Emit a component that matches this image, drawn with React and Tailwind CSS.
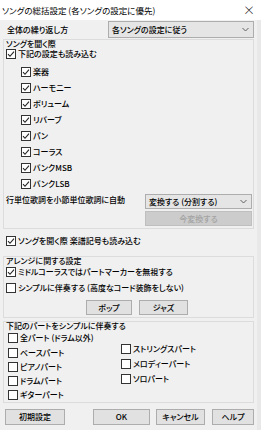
import React from "react";

const Check = ({ checked }) => (
  <span className="w-[10px] h-[10px] border border-[#333] bg-white flex items-center justify-center shrink-0">
    {checked && (
      <svg width="8" height="8" viewBox="0 0 8 8">
        <path d="M1 4.2 L3 6.3 L7 1.6" fill="none" stroke="#222" strokeWidth="1.1" />
      </svg>
    )}
  </span>
);

const CheckRow = ({ checked, label, className = "h-[16px]" }) => (
  <div className={`flex items-center gap-[2px] ${className}`}>
    <Check checked={checked} />
    <span className="whitespace-nowrap leading-[10px]">{label}</span>
  </div>
);

const Chevron = () => (
  <svg width="7" height="5" viewBox="0 0 7 5">
    <path d="M0.5 1 L3.5 4 L6.5 1" fill="none" stroke="#606060" strokeWidth="1" />
  </svg>
);

const Select = ({ value, className = "" }) => (
  <div
    className={`flex items-center justify-between bg-[#e5e5e5] border border-[#adadad] pl-[3px] pr-[4px] ${className}`}
  >
    <span className="whitespace-nowrap">{value}</span>
    <Chevron />
  </div>
);

const Btn = ({ children, className = "" }) => (
  <div
    className={`flex items-center justify-center bg-[#e1e1e1] border border-[#adadad] ${className}`}
  >
    {children}
  </div>
);

const Group = ({ label, className = "", children }) => (
  <div className={`border border-[#dcdcdc] ${className}`}>
    <div className="leading-[8px] pl-[2px] whitespace-nowrap">{label}</div>
    {children}
  </div>
);

const items = ["楽器", "ハーモニー", "ボリューム", "リバーブ", "パン", "コーラス", "バンクMSB", "バンクLSB"];

export default function App() {
  return (
    <div
      className="w-[261px] h-[430px] bg-[#f0f0f0] text-black text-[8px] font-medium flex flex-col overflow-hidden [font-feature-settings:'palt']"
      style={{ fontFamily: '"Noto Sans CJK JP", "Noto Sans", sans-serif' }}
    >
      <div className="h-[20px] bg-white flex items-center justify-between pl-[2px] pr-[6px] shrink-0">
        <span className="text-[8.5px] font-normal whitespace-nowrap">ソングの総括設定 (各ソングの設定に優先)</span>
        <span className="text-[12px] leading-none font-light">×</span>
      </div>

      <div className="flex-1 flex border-r-[4px] border-[#e8e8e8]">
        <div className="flex-1 flex flex-col pl-[3px] pr-[3px]">
          <div className="flex items-center mt-[1px] h-[17px]">
            <span className="pl-[4px]">全体の繰り返し方</span>
            <Select value="各ソングの設定に従う" className="ml-auto w-[146px] h-[17px]" />
          </div>

          <Group label="ソングを聞く際" className="mt-[1px]">
            <CheckRow checked label="下記の設定も読み込む" className="h-[16px] -mt-[2px] pl-[2px]" />
            <div className="flex flex-col mt-[2px] pl-[17px]">
              {items.map((t) => (
                <CheckRow key={t} checked label={t} />
              ))}
            </div>
            <div className="flex items-start pr-[1px] pb-[2px]">
              <span className="pl-[2px] mt-[1px] leading-[14px] whitespace-nowrap">行単位歌詞を小節単位歌詞に自動</span>
              <div className="ml-auto flex flex-col gap-[2px] w-[107px] mt-[2px]">
                <Select value="変換する (分割する)" className="h-[15px]" />
                <div className="h-[15px] bg-[#cccccc] border border-[#bfbfbf] flex items-center justify-center text-[#a3a3a3]">
                  今変換する
                </div>
              </div>
            </div>
          </Group>

          <CheckRow checked label="ソングを開く際 楽譜記号も読み込む" className="h-[16px] mt-[4px] pl-[3px]" />

          <Group label="アレンジに関する設定" className="mt-[7px]">
            <CheckRow checked label="ミドルコーラスではパートマーカーを無視する" className="h-[16px] -mt-[1px] pl-[2px]" />
            <CheckRow label="シンプルに伴奏する (高度なコード装飾をしない)" className="h-[16px] pl-[2px]" />
            <div className="flex gap-[7px] pl-[82px] mt-[4px] pb-[2px]">
              <Btn className="w-[46px] h-[15px]">ポップ</Btn>
              <Btn className="w-[49px] h-[15px]">ジャズ</Btn>
            </div>
          </Group>

          <Group label="下記のパートをシンプルに伴奏する" className="mt-[3px]">
            <CheckRow label="全パート (ドラム以外)" className="h-[16px] pl-[4px]" />
            <div className="flex">
              <div className="flex flex-col w-[117px] pl-[4px]">
                <CheckRow label="ベースパート" className="h-[14px]" />
                <CheckRow label="ピアノパート" className="h-[14px]" />
                <CheckRow label="ドラムパート" className="h-[14px]" />
                <CheckRow label="ギターパート" className="h-[14px]" />
              </div>
              <div className="flex flex-col -mt-[5px]">
                <CheckRow label="ストリングスパート" className="h-[15px]" />
                <CheckRow label="メロディーパート" className="h-[15px]" />
                <CheckRow label="ソロパート" className="h-[15px]" />
              </div>
            </div>
          </Group>

          <div className="flex items-center mt-[6px] pl-[2px]">
            <Btn className="w-[60px] h-[16px]">初期設定</Btn>
            <Btn className="w-[57px] h-[16px] ml-[28px] border-[#0078d7]">OK</Btn>
            <Btn className="w-[49px] h-[16px] ml-[6px]">キャンセル</Btn>
            <Btn className="w-[42px] h-[16px] ml-[7px]">ヘルプ</Btn>
          </div>
        </div>
      </div>
    </div>
  );
}
